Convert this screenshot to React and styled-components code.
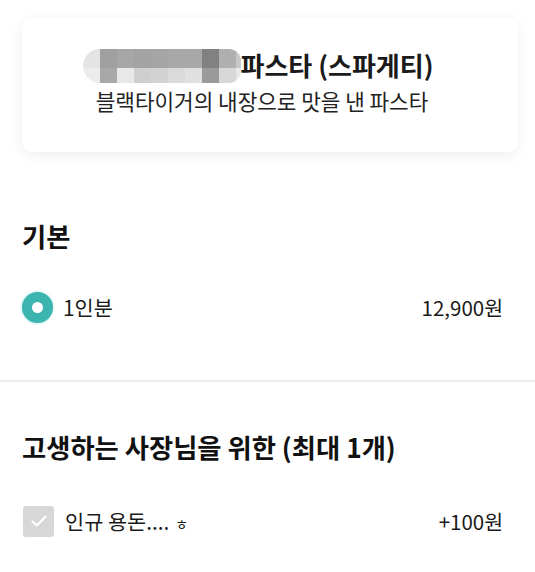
import React from 'react'
import styled, { createGlobalStyle } from 'styled-components'

const GlobalStyle = createGlobalStyle`
  html, body {
    margin: 0;
    padding: 0;
    background: #ffffff;
    font-family: "Noto Sans CJK KR", "Noto Sans", sans-serif;
    color: #1a1a1a;
  }
`;

const Page = styled.div`
  width: 535px;
  height: 572px;
  overflow: hidden;
  box-sizing: border-box;
  padding-top: 18px;
`;

const MenuCard = styled.div`
  margin: 0 17px 0 22px;
  height: 134px;
  box-sizing: border-box;
  border-radius: 10px;
  background: #fff;
  box-shadow: 0 3px 14px rgba(0, 0, 0, 0.07);
  display: flex;
  flex-direction: column;
  align-items: center;
  padding-top: 29px;
`;

const TitleRow = styled.div`
  display: flex;
  align-items: center;
  margin-right: 24px;
`;

const Title = styled.h1`
  margin: 0;
  font-size: 26px;
  font-weight: 700;
  line-height: 34px;
`;

const Mosaic = styled.div`
  width: 158px;
  height: 34px;
  border-radius: 17px 12px 12px 17px;
  overflow: hidden;
  display: grid;
  grid-template-columns: 17px repeat(8, 17px) 5px;
  grid-template-rows: 19px 15px;
  margin-top: 2px;
`;

const Cell = styled.div`
  background: ${p => p.$c};
`;

const Subtitle = styled.p`
  margin: 5px 16px 0 0;
  font-size: 21.3px;
  line-height: 26px;
  color: #222;
`;

const Section = styled.section`
  padding: 0 32px 0 22px;
`;

const SectionTitle = styled.h2`
  margin: 0;
  font-size: 26.3px;
  font-weight: 700;
  line-height: 34px;
  color: #111;
`;

const OptionRow = styled.div`
  display: flex;
  align-items: center;
  height: 32px;
`;

const Radio = styled.span`
  width: 31px;
  height: 31px;
  border-radius: 50%;
  box-sizing: border-box;
  border: 10.5px solid #3cb5b0;
  background: #fff;
  box-shadow: 0 0 3px rgba(60, 200, 195, 0.5);
  flex-shrink: 0;
`;

const CheckBox = styled.span`
  width: 31px;
  height: 31px;
  border-radius: 3px;
  background: #d7d7d7;
  display: flex;
  align-items: center;
  justify-content: center;
  flex-shrink: 0;
  margin-left: 1px;
`;

const OptionLabel = styled.span`
  margin-left: ${p => p.$gap}px;
  font-size: 20.8px;
  color: #1a1a1a;
  flex: 1;
`;

const Small = styled.span`
  font-size: 14px;
  margin-left: 6px;
`;

const Price = styled.span`
  font-size: 20.5px;
  color: #1a1a1a;
`;

const Divider = styled.hr`
  margin: 0;
  border: 0;
  height: 2px;
  background: #ececec;
`;

const topRow = ['#e4e4e4', '#a0a0a0', '#a6a6a6', '#a3a3a3', '#a5a5a5', '#a8a8a8', '#a8a8a8', '#818181', '#b0b0b0', '#c8c8c8'];
const bottomRow = ['#ececec', '#a8a8a8', '#e8e8e8', '#cfcfcf', '#d3d3d3', '#dadada', '#e0e0e0', '#9a9a9a', '#d8d8d8', '#e8e8e8'];

const App = () => {
  return (
    <Page>
      <GlobalStyle />
      <MenuCard>
        <TitleRow>
          <Mosaic>
            {topRow.map((c, i) => <Cell key={'t' + i} $c={c} />)}
            {bottomRow.map((c, i) => <Cell key={'b' + i} $c={c} />)}
          </Mosaic>
          <Title>파스타 (스파게티)</Title>
        </TitleRow>
        <Subtitle>블랙타이거의 내장으로 맛을 낸 파스타</Subtitle>
      </MenuCard>

      <Section style={{ paddingTop: 67, paddingBottom: 57 }}>
        <SectionTitle>기본</SectionTitle>
        <OptionRow style={{ marginTop: 38 }}>
          <Radio />
          <OptionLabel $gap={10}>1인분</OptionLabel>
          <Price>12,900원</Price>
        </OptionRow>
      </Section>

      <Divider />

      <Section style={{ paddingTop: 48 }}>
        <SectionTitle>고생하는 사장님을 위한 (최대 1개)</SectionTitle>
        <OptionRow style={{ marginTop: 41 }}>
          <CheckBox>
            <svg width="18" height="14" viewBox="0 0 18 14" fill="none">
              <path d="M2.5 7.5 L6.8 11.5 L15.5 2.8" stroke="#fff" strokeWidth="2.2" strokeLinecap="round" strokeLinejoin="round" />
            </svg>
          </CheckBox>
          <OptionLabel $gap={11}>인규 용돈....<Small>ㅎ</Small></OptionLabel>
          <Price>+100원</Price>
        </OptionRow>
      </Section>
    </Page>
  )
}

export default App
